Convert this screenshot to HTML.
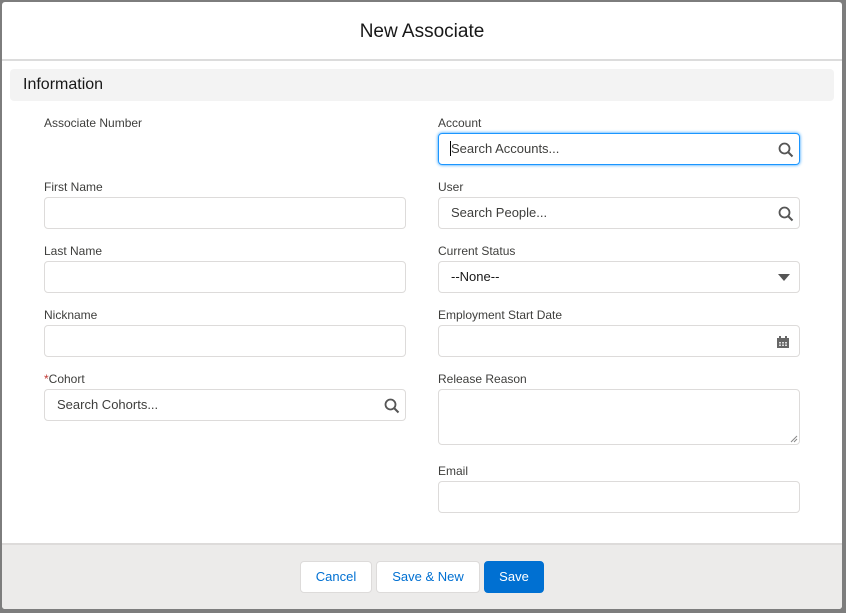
<!DOCTYPE html><html><head><style>
body{margin:0;width:846px;height:613px;background:#7d7d7d;font-family:"Liberation Sans",sans-serif;position:relative;overflow:hidden}
.m{position:absolute;left:2px;top:2px;width:840px;height:607px;background:#fff;border-radius:3px;overflow:hidden}
.h{height:57px;border-bottom:2px solid #dcdcdc;text-align:center;line-height:60px;font-size:19px;color:#181818}
.sec{position:absolute;left:8px;top:67px;width:824px;height:32px;background:#f3f3f3;border-radius:4px;font-size:16px;line-height:32px;color:#181818;text-indent:13px}
.l{position:absolute;font-size:12px;color:#3e3e3c}
.i{position:absolute;width:362px;height:32px;border:1px solid #dddbda;border-radius:4px;box-sizing:border-box;font-size:13px;color:#3e3e3c;line-height:30px;padding-left:12px}
.f{position:absolute;left:0;top:541px;width:840px;height:66px;background:#ecebea;border-top:2px solid #dddbda}
.b{position:absolute;top:16px;height:32px;border:1px solid #dddbda;border-radius:4px;background:#fff;color:#0070d2;font-size:13px;line-height:30px;text-align:center;box-sizing:border-box}
svg{position:absolute}
</style></head><body><div class="m">
<div class="h">New Associate</div>
<div class="sec">Information</div>
<div class="l" style="left:42px;top:114px">Associate Number</div>
<div class="l" style="left:436px;top:114px">Account</div>
<div class="i" style="left:436px;top:131px;border:1px solid #1b96ff;box-shadow:0 0 3px #1b96ff;padding-left:11px"><span style="border-left:1px solid #000;padding-left:0">Search Accounts...</span><svg style="right:5px;top:8px" width="16" height="16" viewBox="0 0 16 16"><circle cx="6.5" cy="6.5" r="5" fill="none" stroke="#555" stroke-width="1.8"/><path d="M10 10l4.5 4.5" stroke="#555" stroke-width="2"/></svg></div>
<div class="l" style="left:42px;top:178px">First Name</div>
<div class="i" style="left:42px;top:195px"></div>
<div class="l" style="left:436px;top:178px">User</div>
<div class="i" style="left:436px;top:195px">Search People...<svg style="right:5px;top:8px" width="16" height="16" viewBox="0 0 16 16"><circle cx="6.5" cy="6.5" r="5" fill="none" stroke="#555" stroke-width="1.8"/><path d="M10 10l4.5 4.5" stroke="#555" stroke-width="2"/></svg></div>
<div class="l" style="left:42px;top:242px">Last Name</div>
<div class="i" style="left:42px;top:259px"></div>
<div class="l" style="left:436px;top:242px">Current Status</div>
<div class="i" style="left:436px;top:259px;color:#181818">--None--<svg style="right:9px;top:12px" width="12" height="8"><path d="M0 0h12L6 7z" fill="#555"/></svg></div>
<div class="l" style="left:42px;top:306px">Nickname</div>
<div class="i" style="left:42px;top:323px"></div>
<div class="l" style="left:436px;top:306px">Employment Start Date</div>
<div class="i" style="left:436px;top:323px"><svg style="right:10px;top:10px" width="12" height="12"><rect x="0" y="2" width="12" height="10" fill="#666"/><rect x="2" y="0" width="2" height="3" fill="#666"/><rect x="8" y="0" width="2" height="3" fill="#666"/><rect x="2" y="6" width="8" height="4" fill="#ddd"/><path d="M4.5 6v4M7.5 6v4M2 8h8" stroke="#666"/></svg></div>
<div class="l" style="left:42px;top:370px"><span style="color:#c23934">*</span>Cohort</div>
<div class="i" style="left:42px;top:387px">Search Cohorts...<svg style="right:5px;top:8px" width="16" height="16" viewBox="0 0 16 16"><circle cx="6.5" cy="6.5" r="5" fill="none" stroke="#555" stroke-width="1.8"/><path d="M10 10l4.5 4.5" stroke="#555" stroke-width="2"/></svg></div>
<div class="l" style="left:436px;top:370px">Release Reason</div>
<div class="i" style="left:436px;top:387px;height:56px"><svg style="right:1px;bottom:1px" width="8" height="8"><path d="M1 7L7 1M4 7L7 4" stroke="#888"/></svg></div>
<div class="l" style="left:436px;top:462px">Email</div>
<div class="i" style="left:436px;top:479px"></div>
<div class="f">
<div class="b" style="left:298px;width:72px">Cancel</div>
<div class="b" style="left:374px;width:104px">Save &amp; New</div>
<div class="b" style="left:482px;width:60px;background:#0070d2;border-color:#0070d2;color:#fff">Save</div>
</div></div></body></html>
